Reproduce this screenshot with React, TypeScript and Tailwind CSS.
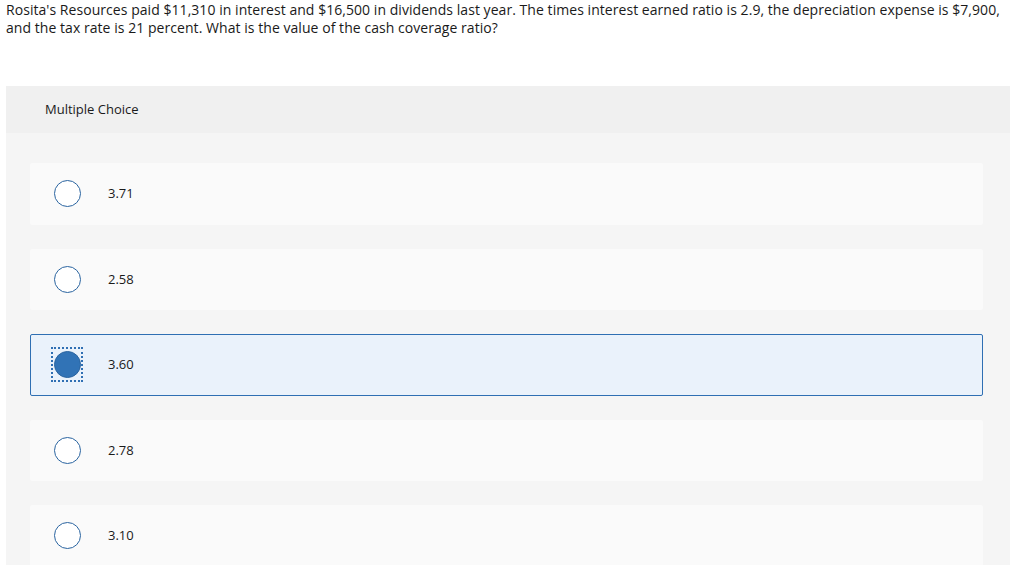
import React from "react";

type TChoice = { label: string; selected?: boolean };
const choices: TChoice[] = [
  { label: "3.71" },
  { label: "2.58" },
  { label: "3.60", selected: true },
  { label: "2.78" },
  { label: "3.10" },
];

export default function App() {
  return (
    <div className="min-h-[574px] bg-white text-[#1a1a1a]" style={{ fontFamily: "'Open Sans', Arial, sans-serif" }}>
      <p className="px-[6px] pt-[1px] text-[14px] leading-[18px] tracking-[0.05px]">
        Rosita's Resources paid $11,310 in interest and $16,500 in dividends last year. The times interest earned ratio is 2.9, the
        depreciation expense is $7,900, and the tax rate is 21 percent. What is the value of the cash coverage ratio?
      </p>
      <div className="mx-[6px] mt-[49px] h-[479px] w-[1004px] overflow-hidden bg-[#f5f5f5]">
        <div className="flex h-[47px] items-center bg-[#f0f0f0] pl-[39px] text-[13px]">Multiple Choice</div>
        <ul className="flex flex-col gap-[24px] px-[24px] pt-[30px] pr-[27px]">
          {choices.map((c, i) => (
            <Choice key={i} {...c} />
          ))}
        </ul>
      </div>
    </div>
  );
}

const Choice = (props: TChoice) => {
  return (
    <li
      className={
        props.selected
          ? "flex h-[61.5px] items-center rounded-[2px] border border-[#2f6fb3] bg-[#eaf2fb] pl-[20px]"
          : "flex h-[61.5px] items-center rounded-[2px] border border-transparent bg-[#fafafa] pl-[20px]"
      }
    >
      <span className={props.selected ? "flex h-[35px] w-[32px] items-center justify-center border-2 border-dotted border-[#2f6fb3]" : "flex h-[35px] w-[32px] items-center justify-center"}>
        <span
          className={
            props.selected
              ? "block h-[27px] w-[27px] rounded-full border border-[#2a64a0] bg-[#3173b6]"
              : "block h-[27px] w-[27px] rounded-full border border-[#2a64a0] bg-white"
          }
        />
      </span>
      <span className="ml-[25px] text-[13px]">{props.label}</span>
    </li>
  );
};
